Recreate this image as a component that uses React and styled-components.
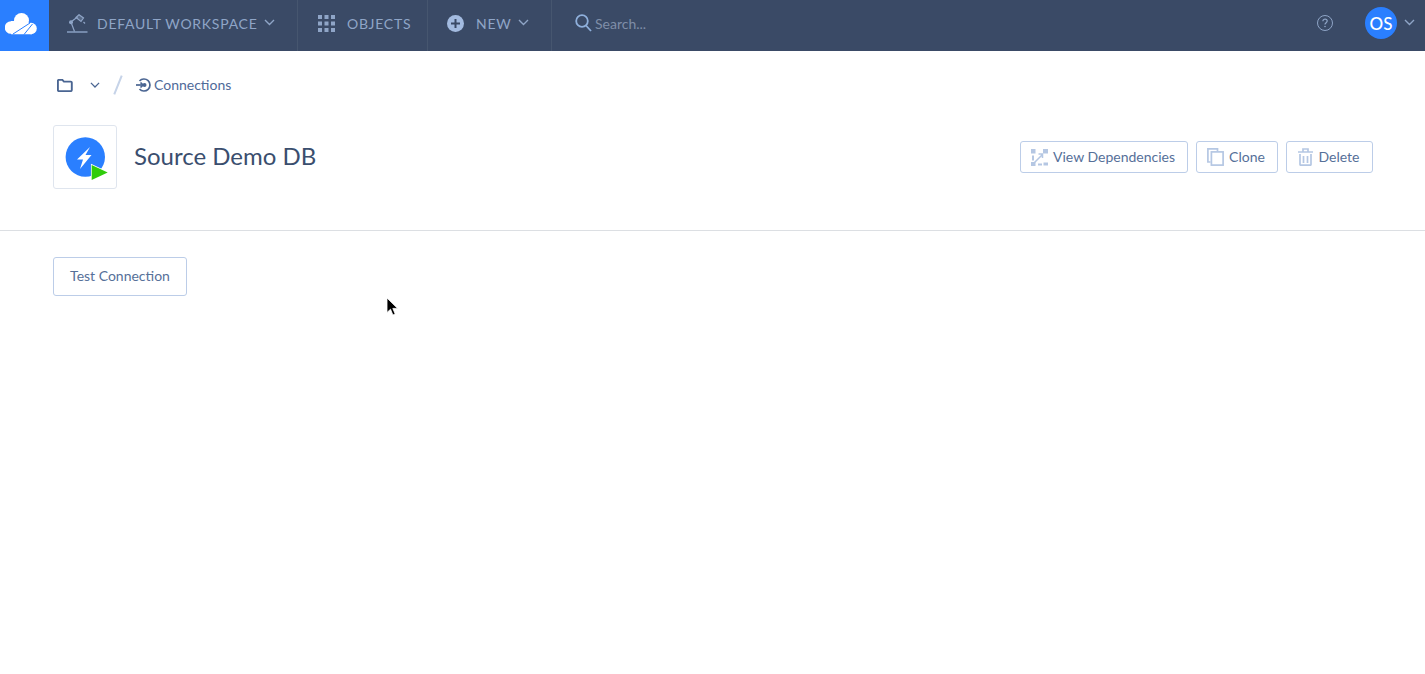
import React from 'react';
import styled, { createGlobalStyle } from 'styled-components';

const GlobalStyle = createGlobalStyle`
	html, body {
		margin: 0;
		padding: 0;
		background: #ffffff;
		font-family: Lato, "Open Sans", sans-serif;
	}
`;

const Chevron = ({ size = 11, color = '#8fa5c7' }) => (
	<svg width={size} height={size * 0.64} viewBox="0 0 11 7" fill="none" stroke={color} strokeWidth="1.4">
		<path d="M1 1l4.500 4.500L10 1" />
	</svg>
);

const CloudLogo = () => (
	<svg width="32" height="22" viewBox="0 0 32 22">
		<g fill="#fff">
			<circle cx="6" cy="14.500" r="6.300" />
			<circle cx="16.500" cy="7.500" r="7.500" />
			<circle cx="26" cy="15.500" r="5.800" />
			<path d="M6 8h13l8 3v10.300H6z" />
		</g>
		<path fill="none" stroke="#2a7fff" strokeWidth="1" d="M8 21L25 10M19 21.500L27.500 11" />
	</svg>
);

const LampIcon = () => (
	<svg width="21" height="19" viewBox="0 0 21 19" fill="none" stroke="#8fa5c7" strokeWidth="1.200">
		<path d="M0 18h20.500" strokeWidth="1.400" />
		<circle cx="4" cy="8.300" r="2" fill="#8fa5c7" stroke="none" />
		<path d="M4.500 7.500L10.500 3M4.500 9.500l3 8" />
		<path d="M9 3.500L12 .7l4.500 3.300-2.500 3.400z" fill="#8fa5c7" fillOpacity=".35" />
		<path d="M16.500 8l1.500 1.500" />
	</svg>
);

const GridIcon = () => (
	<svg width="17" height="17" viewBox="0 0 17 17" fill="#8fa5c7">
		{[0, 6.5, 13].flatMap((y) => [0, 6.5, 13].map((x) => (
			<rect key={`${x}-${y}`} x={x} y={y} width="4" height="4" />
		)))}
	</svg>
);

const PlusCircleIcon = () => (
	<svg width="17" height="17" viewBox="0 0 17 17">
		<circle cx="8.500" cy="8.500" r="8.500" fill="#a3bbe0" />
		<path d="M8.500 4v9M4 8.500h9" stroke="#3a4a66" strokeWidth="2" />
	</svg>
);

const SearchIcon = () => (
	<svg width="17" height="18" viewBox="0 0 17 18" fill="none" stroke="#8fb0dc" strokeWidth="1.800">
		<circle cx="7" cy="7" r="5.800" />
		<path d="M11 11.500l5 5.500" />
	</svg>
);

const HelpIcon = () => (
	<svg width="16" height="16" viewBox="0 0 16 16" fill="none" stroke="#8fa5c7" strokeWidth="1">
		<circle cx="8" cy="8" r="7.500" />
		<path d="M5.900 6.200c0-1.200 1-2 2.200-2s2.100.8 2.100 1.900c0 1.600-2.200 1.600-2.200 3.400" strokeWidth="1.200" />
		<circle cx="8" cy="11.500" r=".8" fill="#8fa5c7" stroke="none" />
	</svg>
);

const FolderIcon = () => (
	<svg width="16" height="13" viewBox="0 0 16 13" fill="none" stroke="#4a6592" strokeWidth="1.900">
		<path d="M.9 11V1.800c0-.5.400-.9 1-.9h3.500l1.500 1.700h6.900c.5 0 1 .4 1 1V11c0 .6-.5 1.100-1 1.100H1.900c-.6 0-1-.5-1-1.100z" />
	</svg>
);

const ConnectionIcon = () => (
	<svg width="15" height="14" viewBox="0 0 15 14" fill="none" stroke="#4a6592" strokeWidth="1.700">
		<path d="M3.500 3A6 6 0 1 1 3.500 11" />
		<circle cx="8.500" cy="7" r="2" fill="#4a6592" stroke="none" />
		<path d="M0 7h7" />
		<path d="M4.500 4.500L7 7l-2.500 2.500" />
	</svg>
);

const SourceIcon = () => (
	<svg width="44" height="44" viewBox="0 0 44 44">
		<circle cx="20.300" cy="20" r="19.700" fill="#2a7fff" />
		<path fill="#fff" d="M25 10L12 22.500h6l-3 9.500L26.500 18h-6z" />
		<path fill="#2fcc0a" stroke="#fff" strokeWidth="1.500" paintOrder="stroke" d="M26.700 28L42.700 35.500 26.700 43z" />
	</svg>
);

const DependenciesIcon = () => (
	<svg width="17" height="17" viewBox="0 0 17 17" fill="#b5c7e3">
		<rect x="0" y="0" width="4.500" height="4.500" />
		<rect x="12" y="0" width="5" height="4.500" />
		<rect x="1" y="6.500" width="2" height="5" />
		<rect x="0" y="13" width="4.500" height="4" />
		<rect x="7" y="14.500" width="4" height="2" />
		<rect x="12.500" y="13.500" width="4.500" height="3" />
		<path d="M3.500 13.500L11 6M7.500 5h4v4" stroke="#b5c7e3" strokeWidth="1.500" fill="none" />
	</svg>
);

const CloneIcon = () => (
	<svg width="17" height="18" viewBox="0 0 17 18" fill="none" stroke="#b5c7e3" strokeWidth="1.700">
		<path d="M3.500 14H.9V.9h9.600V3.500" />
		<rect x="4.400" y="3.900" width="11.700" height="13.200" />
	</svg>
);

const TrashIcon = () => (
	<svg width="15" height="18" viewBox="0 0 15 18" fill="none" stroke="#b5c7e3" strokeWidth="1.700">
		<path d="M0 4h15M5 3.500V1h5v2.500" />
		<path d="M2 6v10.500c0 .4.300.7.800.7h9.400c.5 0 .8-.3.800-.7V6" />
		<path d="M5.500 8v7M9.500 8v7" />
	</svg>
);

const CursorIcon = () => (
	<svg width="13" height="20" viewBox="0 0 13 20">
		<path d="M1 1v14.500l3.500-3.300 2.400 5.800 2.300-1-2.400-5.600h4.800z" fill="#000" stroke="#fff" strokeWidth=".8" />
	</svg>
);

export default function App() {
	return (
		<Page>
			<GlobalStyle />
			<Nav>
				<LogoBox><CloudLogo /></LogoBox>
				<NavSection $width={249} $pad={18}>
					<LampIcon />
					<NavLabel $left={9}>DEFAULT WORKSPACE</NavLabel>
					<ChevronSlot $left={7}><Chevron /></ChevronSlot>
				</NavSection>
				<NavSection $width={130} $pad={20}>
					<GridIcon />
					<NavLabel $left={12}>OBJECTS</NavLabel>
				</NavSection>
				<NavSection $width={124} $pad={19}>
					<PlusCircleIcon />
					<NavLabel $left={12}>NEW</NavLabel>
					<ChevronSlot $left={7}><Chevron /></ChevronSlot>
				</NavSection>
				<SearchBox>
					<SearchIcon />
					<SearchText>Search...</SearchText>
				</SearchBox>
				<NavRight>
					<HelpIcon />
					<Avatar>OS</Avatar>
					<Chevron />
				</NavRight>
			</Nav>

			<Breadcrumbs>
				<FolderIcon />
				<ChevronSlot $left={17}><Chevron color="#4a6592" size={10} /></ChevronSlot>
				<Slash />
				<ConnectionIcon />
				<CrumbText>Connections</CrumbText>
			</Breadcrumbs>

			<Header>
				<IconBox><SourceIcon /></IconBox>
				<Title>Source Demo DB</Title>
				<Actions>
					<ActionButton $width={168}><DependenciesIcon /><ButtonText>View Dependencies</ButtonText></ActionButton>
					<ActionButton $width={82}><CloneIcon /><ButtonText>Clone</ButtonText></ActionButton>
					<ActionButton $width={87} $shift={1}><TrashIcon /><ButtonText>Delete</ButtonText></ActionButton>
				</Actions>
			</Header>

			<Divider />

			<Content>
				<TestButton><ButtonText>Test Connection</ButtonText></TestButton>
			</Content>

			<Cursor><CursorIcon /></Cursor>
		</Page>
	);
}

const Page = styled.div`
	position: relative;
	min-height: 674px;
	overflow: hidden;
	background: #ffffff;
`;

const Nav = styled.nav`
	display: flex;
	align-items: stretch;
	height: 51px;
	background-color: #3a4a66;
`;

const LogoBox = styled.div`
	display: flex;
	align-items: center;
	box-sizing: border-box;
	width: 49px;
	padding: 0 0 3px 5px;
	background-color: #2a7fff;
`;

const NavSection = styled.div`
	display: flex;
	align-items: center;
	box-sizing: border-box;
	width: ${(p) => p.$width}px;
	padding-left: ${(p) => p.$pad}px;
	padding-bottom: 5px;
	border-right: 1px solid #46566f;
`;

const NavLabel = styled.span`
	margin-left: ${(p) => p.$left}px;
	color: #8fa5c7;
	font-size: 14px;
	letter-spacing: 0.73px;
	white-space: nowrap;
`;

const ChevronSlot = styled.span`
	display: flex;
	margin-left: ${(p) => p.$left}px;
`;

const SearchBox = styled.div`
	display: flex;
	align-items: center;
	margin-left: 23px;
	padding-bottom: 5px;
`;

const SearchText = styled.span`
	margin-left: 3px;
	color: #7f8ea8;
	font-size: 14px;
`;

const NavRight = styled.div`
	display: flex;
	align-items: center;
	margin-left: auto;
	padding: 0 10px 5px 0;
`;

const Avatar = styled.div`
	display: flex;
	align-items: center;
	justify-content: center;
	width: 32px;
	height: 32px;
	margin: 0 7px 0 32px;
	border-radius: 50%;
	background-color: #2a7fff;
	color: #ffffff;
	font-size: 17px;
	font-weight: 500;
`;

const Breadcrumbs = styled.div`
	display: flex;
	align-items: center;
	height: 20px;
	margin-top: 24px;
	padding-left: 57px;
`;

const Slash = styled.span`
	width: 2px;
	height: 20px;
	margin: 0 17px 0 17px;
	background-color: #c6d3e8;
	transform: rotate(22deg);
`;

const CrumbText = styled.span`
	margin: 0 0 2px 3px;
	color: #4f6a99;
	font-size: 14px;
`;

const Header = styled.header`
	display: flex;
	align-items: center;
	margin-top: 30px;
	padding: 0 52px 0 53px;
`;

const IconBox = styled.div`
	display: flex;
	box-sizing: border-box;
	width: 64px;
	height: 64px;
	padding: 11px 0 0 11px;
	border: 1px solid #dfe5ee;
	border-radius: 3px;
`;

const Title = styled.h1`
	margin: 0 0 3px 17px;
	color: #3a4e6e;
	font-size: 24px;
	font-weight: 400;
`;

const Actions = styled.div`
	display: flex;
	gap: 8px;
	margin-left: auto;
`;

const ActionButton = styled.button`
	display: flex;
	align-items: center;
	justify-content: center;
	gap: ${(p) => 5 + (p.$shift || 0)}px;
	box-sizing: border-box;
	width: ${(p) => p.$width}px;
	height: 32px;
	padding: 0 2px 0 0;
	border: 1px solid #bccde8;
	border-radius: 3px;
	background: #ffffff;
	color: #567099;
	font-family: inherit;
	font-size: 14px;
`;

const ButtonText = styled.span`
	display: block;
	margin-bottom: 2px;
`;

const Divider = styled.hr`
	height: 1px;
	margin: 41px 0 0;
	border: 0;
	background-color: #dcdfe3;
`;

const Content = styled.section`
	padding: 26px 53px;
`;

const TestButton = styled.button`
	box-sizing: border-box;
	width: 134px;
	height: 39px;
	padding: 0;
	border: 1px solid #bccde8;
	border-radius: 3px;
	background: #ffffff;
	color: #567099;
	font-family: inherit;
	font-size: 14px;
`;

const Cursor = styled.div`
	position: absolute;
	left: 386px;
	top: 297px;
`;
